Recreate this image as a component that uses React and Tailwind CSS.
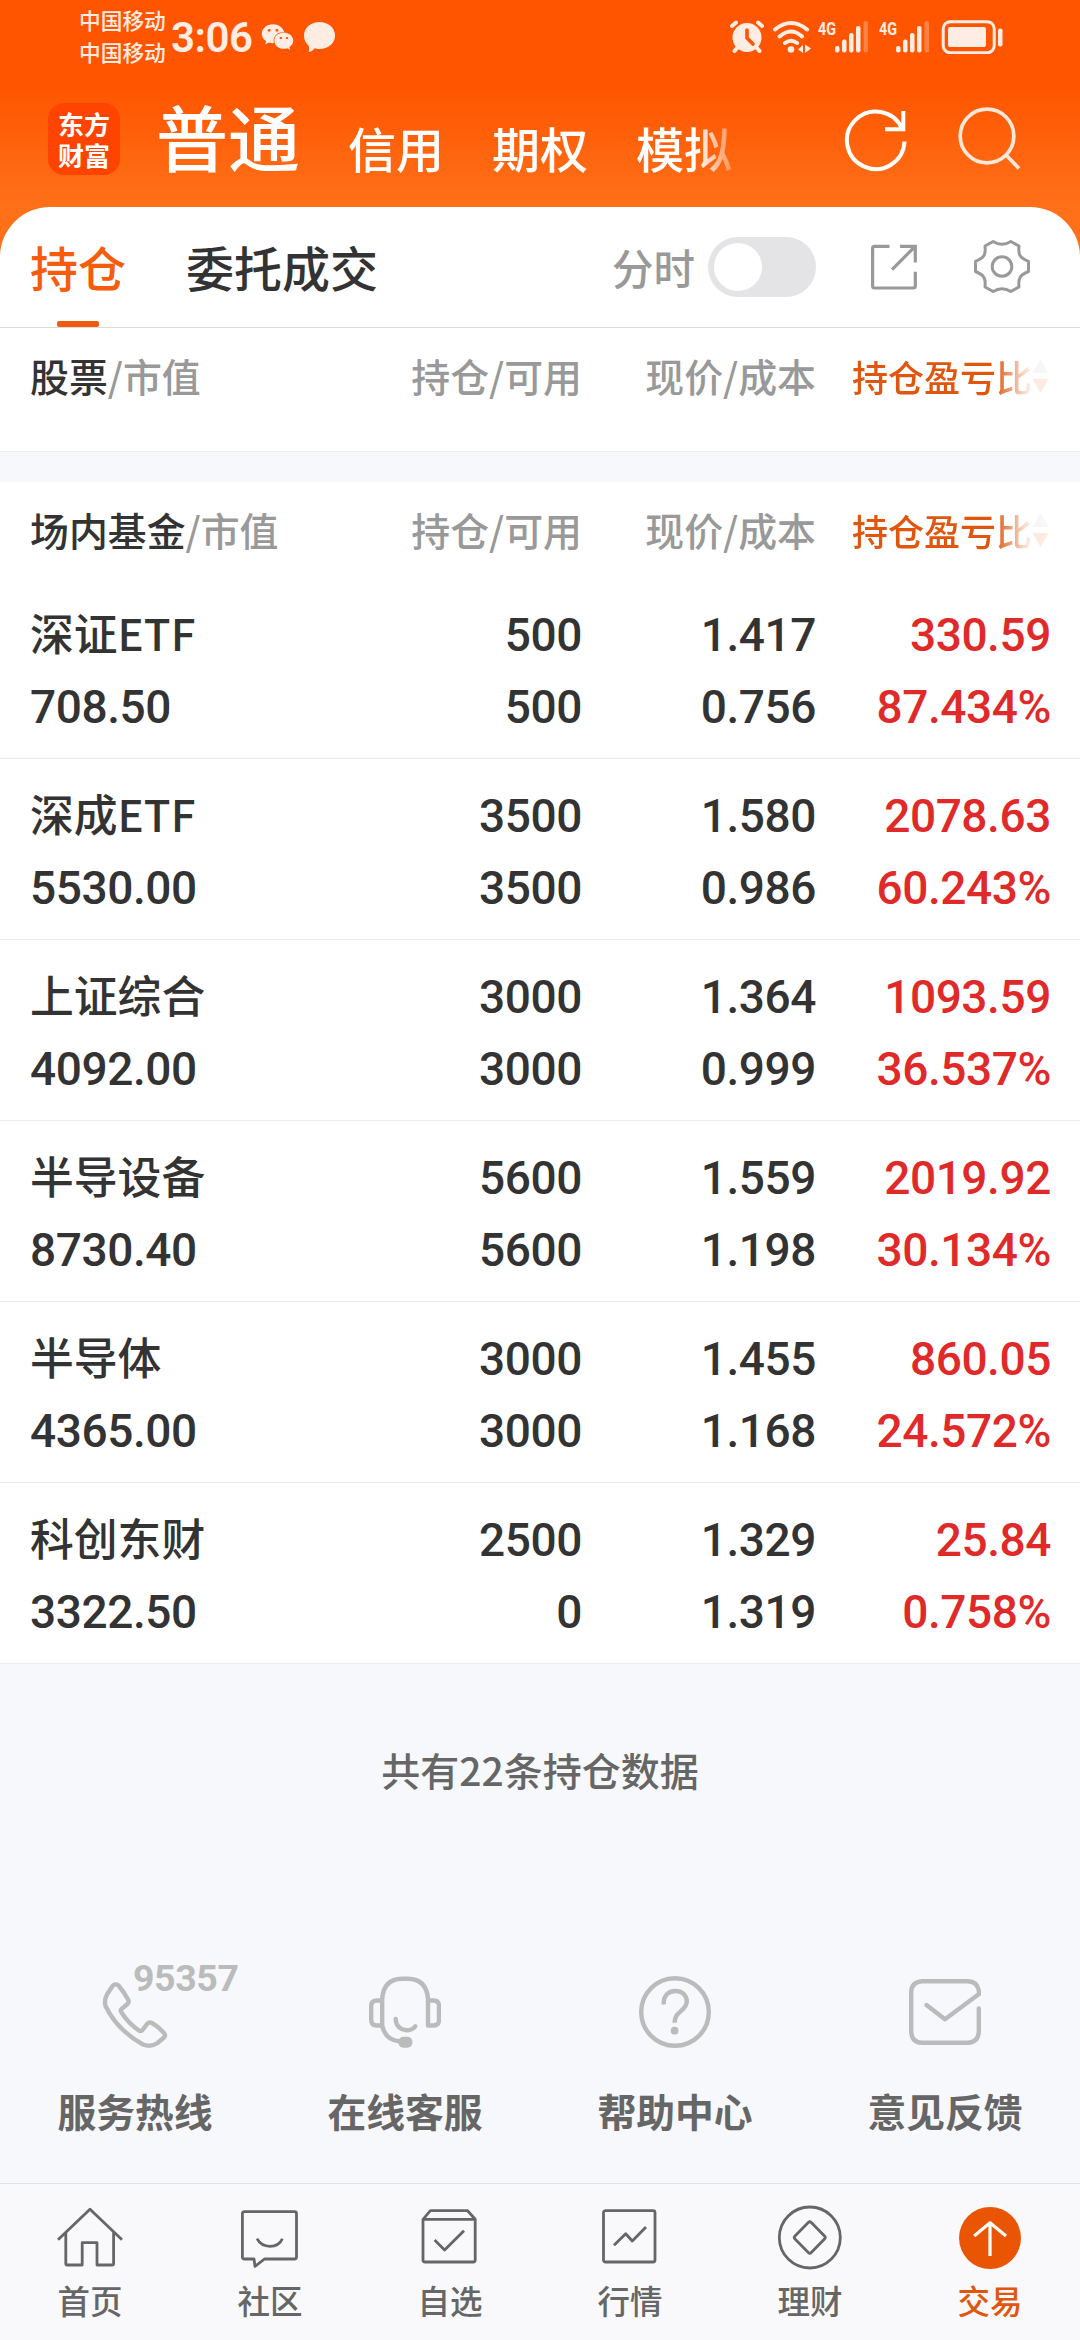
import React, { useState } from 'react';
import { FaWeixin } from 'react-icons/fa';

const funds = [
  { name: '深证ETF', value: '708.50', held: '500', usable: '500', price: '1.417', cost: '0.756', profit: '330.59', ratio: '87.434%' },
  { name: '深成ETF', value: '5530.00', held: '3500', usable: '3500', price: '1.580', cost: '0.986', profit: '2078.63', ratio: '60.243%' },
  { name: '上证综合', value: '4092.00', held: '3000', usable: '3000', price: '1.364', cost: '0.999', profit: '1093.59', ratio: '36.537%' },
  { name: '半导设备', value: '8730.40', held: '5600', usable: '5600', price: '1.559', cost: '1.198', profit: '2019.92', ratio: '30.134%' },
  { name: '半导体', value: '4365.00', held: '3000', usable: '3000', price: '1.455', cost: '1.168', profit: '860.05', ratio: '24.572%' },
  { name: '科创东财', value: '3322.50', held: '2500', usable: '0', price: '1.329', cost: '1.319', profit: '25.84', ratio: '0.758%' }
];

const Signal = () => (
  <svg className="h-[34px] w-[52px] overflow-visible" viewBox="0 0 52 34" fill="#ffede3">
    <text x="0" y="15" fontSize="19" fontWeight="700" fontFamily="Roboto, sans-serif" textLength="18" lengthAdjust="spacingAndGlyphs">4G</text>
    <rect x="17" y="26" width="4.5" height="6.5" rx="2" />
    <rect x="24" y="19.5" width="4.5" height="13" rx="2" />
    <rect x="31" y="13" width="4.5" height="19.5" rx="2" />
    <rect x="38" y="6" width="4.5" height="26.5" rx="2" />
    <rect x="45.5" y="1" width="4.5" height="31.5" rx="2" opacity="0.3" />
  </svg>
);

const StatusBar = () => (
  <div className="flex h-[73px] items-center pl-[79px] pr-[76px] text-[#ffede3]">
    <div className="-mt-[2px] w-[90px] text-[21.7px] leading-8 font-medium">
      <div>中国移动</div>
      <div>中国移动</div>
    </div>
    <div className="ml-[2px] mt-[3px] w-[84px] font-[Roboto] text-[42px] leading-none font-semibold tracking-[-0.5px]">3:06</div>
    <FaWeixin className="ml-[6px] h-[30px] w-[33px]" />
    <svg className="ml-[9px] h-8 w-8" viewBox="0 0 32 32" fill="currentColor">
      <path d="M16.5 1C25 1 32 6.5 32 14.5S25 28 16.5 28C14.5 28 13 27.7 11.5 27.3C10 29.5 8 31 5.5 31C6.3 29 6.3 27 5.5 24.5C2.7 22.2 1 18.5 1 14.5C1 6.5 8 1 16.5 1Z" />
    </svg>
    <div className="ml-auto flex items-center">
      <svg className="h-[34px] w-[34px]" viewBox="0 0 34 34" fill="currentColor">
        <circle cx="17" cy="17.5" r="14.5" />
        <path d="M17 10V18L23 24" fill="none" stroke="#ff5500" strokeWidth="3.6" strokeLinecap="round" />
        <path d="M2 6L6 2.5M28 2.5L32 6M7 28L4.5 31M27 28L29.5 31" stroke="currentColor" strokeWidth="4" strokeLinecap="round" />
      </svg>
      <svg className="ml-[8px] h-[34px] w-[40px]" viewBox="0 0 40 34" fill="none" stroke="currentColor" strokeWidth="4" strokeLinecap="round">
        <path d="M3 9.5Q19 -3.5 35 9.5M7.5 16.5Q19 6.5 30 16.5M13 23Q19 18.5 25 23" />
        <circle cx="19" cy="29.5" r="3.3" fill="currentColor" stroke="none" />
        <path d="M31 25V33L26 29.5ZM33 24.5L39 28.5L33 33Z" fill="currentColor" stroke="none" />
      </svg>
      <div className="ml-[6px]"><Signal /></div>
      <div className="ml-[9px]"><Signal /></div>
      <svg className="ml-[9px] h-[34px] w-[64px]" viewBox="0 0 64 34" fill="none">
        <rect x="3.2" y="1.7" width="51" height="31" rx="7" stroke="currentColor" strokeWidth="3" />
        <rect x="8" y="7" width="38" height="20" rx="2" fill="currentColor" />
        <rect x="58" y="8.5" width="4.5" height="18" rx="2" fill="currentColor" />
      </svg>
    </div>
  </div>
);

const TopNav = () => (
  <div className="flex h-[134px] items-start pl-12 text-white">
    <div className="mt-[30px] flex h-[72px] w-[72px] flex-col items-center justify-center rounded-2xl bg-[#ff4300] text-[26px] leading-[31px] font-bold">
      <div>东方</div>
      <div>财富</div>
    </div>
    <div className="-mt-[2px] ml-9 flex w-[584px] items-baseline gap-12 whitespace-nowrap text-[48px] leading-[100px] font-medium mask-[linear-gradient(to_right,#000_540px,transparent_590px)]">
      <span className="relative top-[-2px] mt-[16px] text-[72px]">普通</span>
      <span>信用</span>
      <span>期权</span>
      <span>模拟</span>
    </div>
    <svg className="mt-[35px] ml-[103px] h-16 w-16" viewBox="0 0 64 64" fill="none" stroke="currentColor" strokeWidth="4">
      <path d="M61.5 33.5A28.8 28.8 0 1 1 59 20.5" />
      <path d="M60.3 3V21.3H42" />
    </svg>
    <svg className="mt-[33px] ml-[49px] h-[66px] w-[66px] opacity-85" viewBox="0 0 66 66" fill="none" stroke="currentColor" strokeWidth="3.7">
      <circle cx="31" cy="30" r="26.8" />
      <path d="M49.5 48.5L63 62.5" />
    </svg>
  </div>
);

const TabBar = () => {
  const [minute, setMinute] = useState(false);

  return (
    <div className="flex h-[121px] items-center border-b border-[#dcdcdc] pl-[30px] text-[48px] font-medium">
      <div className="flex h-full flex-col items-center justify-between pt-[24px] text-[#f75c0c]">
        <span className="leading-[70px]">持仓</span>
        <span className="h-[6px] w-[42px] rounded-[2px] bg-[#f05a10]"></span>
      </div>
      <span className="-mt-[2px] ml-[60px] text-[#333]">委托成交</span>
      <span className="ml-[234px] text-[41.5px] text-[#999]">分时</span>
      <button
        onClick={() => setMinute(!minute)}
        className={`ml-[13px] flex h-[60px] w-[108px] items-center rounded-full px-[6px] ${minute ? 'justify-end bg-[#f75c0c]' : 'bg-[#e4e4e6]'}`}
      >
        <span className="h-12 w-12 rounded-full bg-white"></span>
      </button>
      <svg className="ml-[54px] h-[50px] w-[50px]" viewBox="0 0 50 50" fill="none" stroke="#999" strokeWidth="3.2">
        <path d="M19.5 4.3H4.6Q2.6 4.3 2.6 6.3V44Q2.6 46 4.6 46H43.3Q45.3 46 45.3 44V29.7" />
        <path d="M30 4.3H45.3V20.5M44.5 5L22 27.7" />
      </svg>
      <svg className="ml-[54px] h-[56px] w-[56px]" viewBox="0 0 56 56" fill="none" stroke="#999" strokeWidth="3" strokeLinejoin="round">
        <path d="M19.2 2.5Q28 8 36.8 2.5L45 7C44 16 46 19 54.5 22.5V32.5C46 36 44 39 45 48L36.8 52.5Q28 47 19.2 52.5L11 48C12 39 10 36 1.5 32.5V22.5C10 19 12 16 11 7Z" />
        <circle cx="28" cy="27.5" r="9.8" />
      </svg>
    </div>
  );
};

const ColumnHeader = ({ title }) => (
  <div className="flex h-[96px] items-center pb-[1px] pl-[30px] text-[38.9px] font-medium text-[#999]">
    <div className="w-[300px]"><span className="text-[#333]">{title}</span>/市值</div>
    <div className="w-[252px] text-right">持仓/可用</div>
    <div className="w-[234px] text-right">现价/成本</div>
    <div className="ml-[36px] flex items-center text-[36px] text-[#e0560f] mask-[linear-gradient(to_right,#000_142px,rgb(0_0_0/0.15)_175px,rgb(0_0_0/0.1)_200px)]">
      持仓盈亏比
      <svg className="h-[36px] w-[17px]" viewBox="0 0 17 36">
        <path d="M8.5 1L16.5 15H.5Z" fill="#bbb" />
        <path d="M8.5 35L16.5 21H.5Z" fill="#f05a10" />
      </svg>
    </div>
  </div>
);

const FundRow = ({ fund }) => (
  <div className="flex h-[181px] border-b border-[#ebebeb] pt-[21px] pl-[30px] font-[Roboto,'Noto_Sans_CJK_SC',sans-serif] text-[46px] leading-[72px] font-medium tracking-[-0.4px] text-[#333]">
    <div className="w-[300px]">
      <div className="relative top-[-3px] font-['Noto_Sans_CJK_SC'] text-[43.8px] tracking-normal">{fund.name}</div>
      <div>{fund.value}</div>
    </div>
    <div className="w-[252px] text-right">
      <div>{fund.held}</div>
      <div>{fund.usable}</div>
    </div>
    <div className="w-[234px] text-right">
      <div>{fund.price}</div>
      <div>{fund.cost}</div>
    </div>
    <div className="w-[235px] text-right text-[#e02a2a]">
      <div>{fund.profit}</div>
      <div>{fund.ratio}</div>
    </div>
  </div>
);

const services = [
  {
    label: '服务热线',
    icon: (
      <path d="M16.5 8.5Q18 8 19.5 9.5Q25 16 29 23.5Q30.5 26 28.5 28L22.5 33Q21 34.5 22.5 36.5Q30 48 40 54.5Q42 55.5 43.5 54L48 48Q50 45.5 53 47Q59.5 50.5 65 57Q67 59.5 65 61.5L58.5 67Q52 71.5 44 68.5Q18 54 6.5 30Q5 24 8 18.5L13.5 10Q15 8 16.5 8.5Z" />
    )
  },
  {
    label: '在线客服',
    icon: (
      <>
        <path d="M13.2 49.5V23Q14.5 3 33 2.8H39Q57.5 3 59 23V49.5H64Q70 49.5 70 44V30Q70 24.5 64 24.5H59M13.2 24.5H8Q2.2 24.5 2.2 30V44Q2.2 49.5 8 49.5H13.2Q16 64 31 65.5" />
        <path d="M26.7 43Q27 53 37.5 54.3Q43 54.3 46.3 50.3" strokeLinecap="round" />
        <rect x="29.4" y="60.7" width="14" height="11" rx="5" fill="#bbb" stroke="none" />
      </>
    )
  },
  {
    label: '帮助中心',
    icon: (
      <>
        <circle cx="36" cy="36" r="33.8" />
        <path d="M24.8 28.5C24 19 30 15 36.3 15C43 15 47.8 19 47.8 25.5C47.8 35 35.3 35 35.6 46.7" />
        <circle cx="35.6" cy="54.7" r="3.9" fill="#bbb" stroke="none" />
      </>
    )
  },
  {
    label: '意见反馈',
    icon: (
      <path d="M17.5 29L36 43.3L70 18V16Q69 5.5 59 5.2H13Q2.5 6 2.2 16V56Q3 66.5 13 66.8H59Q69 66 69.8 56V32.5" strokeLinecap="round" />
    )
  }
];

const Services = () => (
  <div className="grid h-[249px] grid-cols-4 pt-[42px]">
    {services.map((item, index) => (
      <div key={item.label} className="relative flex flex-col items-center">
        <svg className="h-[72px] w-[72px]" viewBox="0 0 72 72" fill="none" stroke="#bbb" strokeWidth="4.4" strokeLinejoin="round">
          {item.icon}
        </svg>
        {index === 0 && (
          <span className="absolute top-[-18px] left-[133px] font-[Roboto] text-[37.5px] leading-[40px] font-bold tracking-[-0.4px] text-[#bbb]">95357</span>
        )}
        <span className="mt-[34px] text-[38.8px] leading-[56px] font-bold text-[#666]">{item.label}</span>
      </div>
    ))}
  </div>
);

const tabs = [
  {
    label: '首页',
    icon: <path d="M1 34.7L33 4.3L65 34.7M8.8 27.5V59Q8.8 60 9.8 60H25.2V37.7H40V60H55.6Q56.6 60 56.6 59V27.5" />
  },
  {
    label: '社区',
    icon: (
      <>
        <path d="M7.4 6.7H57.5Q59.5 6.7 59.5 8.7V52Q59.5 54 57.5 54H27.5L18 61.3L17 54H7.4Q5.4 54 5.4 52V8.7Q5.4 6.7 7.4 6.7Z" />
        <path d="M20 33.7Q24 41.3 33 41.3T45.4 33.7" />
      </>
    )
  },
  {
    label: '自选',
    icon: <path d="M6 14.3L13.4 5.7H50.6L58.2 14.3V55Q58.2 57 56.2 57H8Q6 57 6 55V14.3H58.2M17.6 35L27.6 45L47 25.7" />
  },
  {
    label: '行情',
    icon: (
      <>
        <rect x="6.5" y="5.7" width="51.5" height="51.3" rx="2" />
        <path d="M17 40.3L28.7 28.7L35.3 36L49 22" />
      </>
    )
  },
  {
    label: '理财',
    icon: (
      <>
        <circle cx="32.8" cy="32.5" r="30.5" />
        <path d="M31.3 17.5Q32.8 16 34.3 17.5L47.5 31Q49 32.5 47.5 34L34.3 47.5Q32.8 49 31.3 47.5L18 34Q16.5 32.5 18 31Z" />
      </>
    )
  },
  {
    label: '交易',
    active: true,
    icon: (
      <>
        <circle cx="33" cy="33" r="31" fill="#ea5504" stroke="none" />
        <path d="M33 51V17.5M17.2 31L33 17.8L49 31" stroke="#fff" strokeWidth="3.2" />
      </>
    )
  }
];

const BottomNav = () => (
  <div className="grid h-[157px] grid-cols-6 border-t border-[#e2e3e5] bg-[#f9f9fb] pt-[21px]">
    {tabs.map((tab) => (
      <div key={tab.label} className={`flex flex-col items-center ${tab.active ? 'text-[#e0560f]' : 'text-[#666]'}`}>
        <svg className="h-[66px] w-[66px]" viewBox="0 0 66 66" fill="none" stroke="#666" strokeWidth="2.8" strokeLinejoin="round">
          {tab.icon}
        </svg>
        <span className="mt-[5px] text-[32.5px] leading-[48px] font-medium">{tab.label}</span>
      </div>
    ))}
  </div>
);

const App = () => {
  return (
    <div className="flex h-[2340px] w-[1080px] flex-col overflow-hidden bg-[#f7f8fb] font-['Noto_Sans_CJK_SC',sans-serif]">
      {/* Header */}
      <div className="h-[260px] shrink-0 bg-[linear-gradient(to_bottom,#ff5500_85px,#ff7019_205px)]">
        <StatusBar />
        <TopNav />
      </div>

      {/* Holdings */}
      <div className="-mt-[53px] rounded-t-[50px] bg-white">
        <TabBar />
        <div className="h-[124px] border-b border-[#ebebeb]">
          <ColumnHeader title="股票" />
        </div>
        <div className="h-[30px] bg-[#f7f8fb]"></div>
        <ColumnHeader title="场内基金" />
        {funds.map((fund) => (
          <FundRow key={fund.name} fund={fund} />
        ))}
      </div>

      <div className="mt-[76px] text-center text-[39px] leading-[58px] font-medium text-[#666]">共有22条持仓数据</div>

      <div className="mt-auto">
        <Services />
        <BottomNav />
      </div>
    </div>
  );
};

export default App;
